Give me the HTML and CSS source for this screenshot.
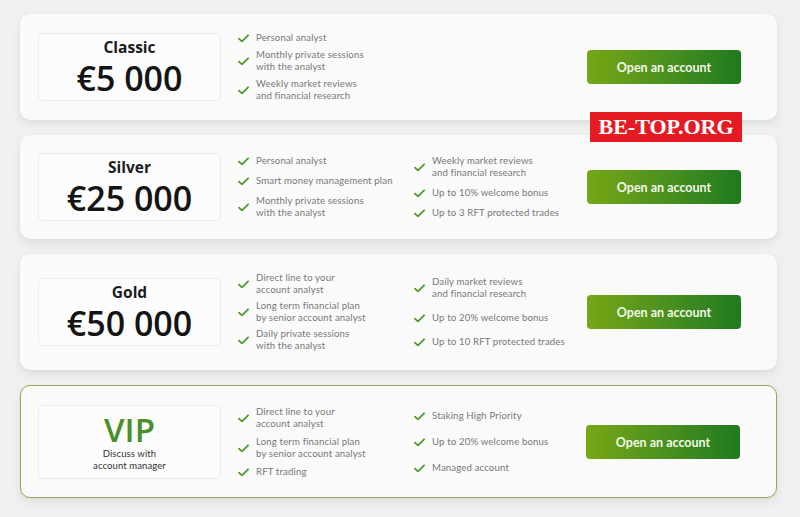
FILE: index.html
```html
<!DOCTYPE html>
<html>
<head>
<meta charset="utf-8">
<link rel="stylesheet" href="styles.css">
</head>
<body>
<svg width="0" height="0" class="defs">
  <defs>
    <symbol id="chk" viewBox="0 0 12 9"><path d="M1 4.6 L4.3 7.6 L11 1" fill="none" stroke="#4c9a2a" stroke-width="1.9" stroke-linecap="round" stroke-linejoin="round"/></symbol>
  </defs>
</svg>
<main class="list">
  <section class="card">
    <div class="box"><div class="name">Classic</div><div class="price">€5 000</div></div>
    <div class="features">
      <ul class="col col1 loose">
        <li><svg class="ic"><use href="#chk"/></svg><span>Personal analyst</span></li>
        <li><svg class="ic"><use href="#chk"/></svg><span>Monthly private sessions<br>with the analyst</span></li>
        <li><svg class="ic"><use href="#chk"/></svg><span>Weekly market reviews<br>and financial research</span></li>
      </ul>
    </div>
    <a class="btn">Open an account</a>
  </section>
  <section class="card">
    <div class="box"><div class="name">Silver</div><div class="price">€25 000</div></div>
    <div class="features">
      <ul class="col col1">
        <li><svg class="ic"><use href="#chk"/></svg><span>Personal analyst</span></li>
        <li><svg class="ic"><use href="#chk"/></svg><span>Smart money management plan</span></li>
        <li><svg class="ic"><use href="#chk"/></svg><span>Monthly private sessions<br>with the analyst</span></li>
      </ul>
      <ul class="col col2">
        <li><svg class="ic"><use href="#chk"/></svg><span>Weekly market reviews<br>and financial research</span></li>
        <li><svg class="ic"><use href="#chk"/></svg><span>Up to 10% welcome bonus</span></li>
        <li><svg class="ic"><use href="#chk"/></svg><span>Up to 3 RFT protected trades</span></li>
      </ul>
    </div>
    <a class="btn">Open an account</a>
  </section>
  <section class="card">
    <div class="box"><div class="name">Gold</div><div class="price">€50 000</div></div>
    <div class="features">
      <ul class="col col1">
        <li><svg class="ic"><use href="#chk"/></svg><span>Direct line to your<br>account analyst</span></li>
        <li><svg class="ic"><use href="#chk"/></svg><span>Long term financial plan<br>by senior account analyst</span></li>
        <li><svg class="ic"><use href="#chk"/></svg><span>Daily private sessions<br>with the analyst</span></li>
      </ul>
      <ul class="col col2">
        <li><svg class="ic"><use href="#chk"/></svg><span>Daily market reviews<br>and financial research</span></li>
        <li><svg class="ic"><use href="#chk"/></svg><span>Up to 20% welcome bonus</span></li>
        <li><svg class="ic"><use href="#chk"/></svg><span>Up to 10 RFT protected trades</span></li>
      </ul>
    </div>
    <a class="btn">Open an account</a>
  </section>
  <section class="card vip">
    <div class="box vipbox"><div class="viptitle">VIP</div><div class="vipsub">Discuss with<br>account manager</div></div>
    <div class="features">
      <ul class="col col1">
        <li><svg class="ic"><use href="#chk"/></svg><span>Direct line to your<br>account analyst</span></li>
        <li><svg class="ic"><use href="#chk"/></svg><span>Long term financial plan<br>by senior account analyst</span></li>
        <li><svg class="ic"><use href="#chk"/></svg><span>RFT trading</span></li>
      </ul>
      <ul class="col col2">
        <li><svg class="ic"><use href="#chk"/></svg><span>Staking High Priority</span></li>
        <li><svg class="ic"><use href="#chk"/></svg><span>Up to 20% welcome bonus</span></li>
        <li><svg class="ic"><use href="#chk"/></svg><span>Managed account</span></li>
      </ul>
    </div>
    <a class="btn">Open an account</a>
  </section>
</main>
<div class="watermark">BE-TOP.ORG</div>
</body>
</html>
```
FILE: styles.css
```css
* { box-sizing: border-box; }
html, body { margin: 0; padding: 0; }
body {
  background: #f0f0f0;
  width: 800px;
  height: 517px;
  overflow: hidden;
  position: relative;
  font-family: "Lato", "Open Sans", sans-serif;
}
.defs { position: absolute; }
.list {
  padding: 14px 0 0 20px;
  display: flex;
  flex-direction: column;
  gap: 15px;
}
.card {
  width: 757px;
  background: #fafafa;
  border-radius: 10px;
  box-shadow: 0 4px 10px rgba(0,0,0,0.07), 0 1px 3px rgba(0,0,0,0.04);
  display: flex;
  align-items: center;
  padding: 18px 36px 18px 18px;
}
.card.vip {
  border: 1px solid #8fac52;
  padding: 19px 36px 18px 17px;
}
.box {
  width: 183px;
  height: 68px;
  flex: none;
  background: #fcfcfc;
  border: 1px solid #ececec;
  border-radius: 5px;
  display: flex;
  flex-direction: column;
  align-items: center;
  justify-content: center;
}
.name {
  font-family: "Open Sans", sans-serif;
  font-weight: 700;
  font-size: 15.5px;
  line-height: 17px;
  color: #1c1c1c;
}
.price {
  font-family: "Open Sans", sans-serif;
  font-weight: 550;
  font-size: 34px;
  line-height: 36px;
  margin-top: 4px;
  color: #141414;
}
.vipbox { height: 74px; }
.viptitle {
  font-family: "Open Sans", sans-serif;
  font-size: 33px;
  line-height: 36px;
  font-weight: 550;
  color: #4a8f28;
}
.vipsub {
  font-size: 9.5px;
  line-height: 12px;
  color: #333;
  text-align: center;
  letter-spacing: 0.1px;
}
.features {
  margin-left: 17px;
  display: flex;
  align-self: stretch;
  align-items: stretch;
}
.col {
  list-style: none;
  margin: 0;
  padding: 0;
  display: flex;
  flex-direction: column;
  justify-content: space-around;
  gap: 4px;
}
.col.loose { gap: 5px; }
.col1 { width: 176px; }
.col2 { width: 160px; }
.col li {
  display: flex;
  align-items: center;
  font-size: 9.6px;
  line-height: 12px;
  letter-spacing: 0.15px;
  color: #787878;
}
.ic {
  width: 11px;
  height: 9px;
  flex: none;
  margin-right: 7px;
}
.btn {
  margin-left: auto;
  width: 154px;
  height: 34px;
  flex: none;
  border-radius: 4px;
  background: linear-gradient(90deg, #77a716 0%, #4c9120 50%, #1f7a1f 100%);
  color: #f2f8e6;
  font-family: "Lato", sans-serif;
  font-weight: 700;
  font-size: 12.5px;
  display: flex;
  align-items: center;
  justify-content: center;
}
.watermark {
  position: absolute;
  left: 590px;
  top: 112px;
  width: 152px;
  height: 30px;
  background: #e51b24;
  color: #fff;
  font-family: "Liberation Serif", serif;
  font-weight: 700;
  font-size: 22px;
  line-height: 30px;
  text-align: center;
}
```
